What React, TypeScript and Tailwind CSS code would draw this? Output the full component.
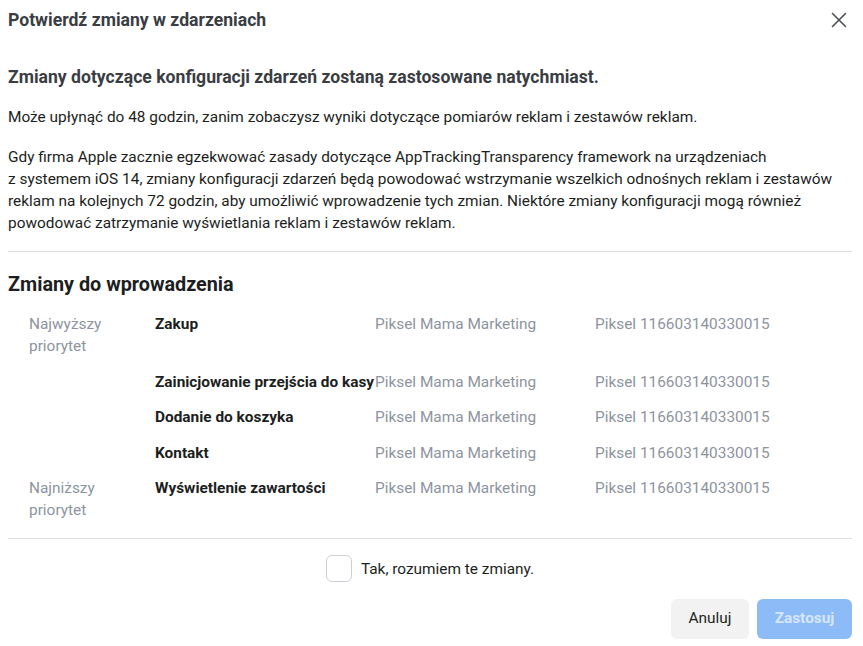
import React from 'react';

const ROWS = [
  { priority: 'Najwyższy priorytet', event: 'Zakup' },
  { priority: '', event: 'Zainicjowanie przejścia do kasy' },
  { priority: '', event: 'Dodanie do koszyka' },
  { priority: '', event: 'Kontakt' },
  { priority: 'Najniższy priorytet', event: 'Wyświetlenie zawartości' },
];

function CloseIcon() {
  return (
    <svg width="16" height="16" viewBox="0 0 16 16" fill="none">
      <path d="M1.5 1.5 L14.5 14.5 M14.5 1.5 L1.5 14.5" stroke="#4b4f56" strokeWidth="1.6" strokeLinecap="round" />
    </svg>
  );
}

export default function App() {
  return (
    <div className="w-[863px] h-[646px] bg-white font-['Roboto',sans-serif] text-[#1c1e21] overflow-hidden">
      {/* Header */}
      <div className="h-10 flex items-center justify-between pl-2 pr-4">
        <h1 className="text-[17.6px] font-bold text-[#3a3d42] leading-5">Potwierdź zmiany w zdarzeniach</h1>
        <button className="w-4 h-4 flex items-center justify-center">
          <CloseIcon />
        </button>
      </div>

      <div className="pl-2 pr-[11px]">
        <h2 className="mt-[27px] text-[17.6px] font-bold leading-5 text-[#3a3d42]">
          Zmiany dotyczące konfiguracji zdarzeń zostaną zastosowane natychmiast.
        </h2>
        <p className="mt-[19px] text-[15.4px] leading-[22px]">
          Może upłynąć do 48 godzin, zanim zobaczysz wyniki dotyczące pomiarów reklam i zestawów reklam.
        </p>
        <p className="mt-[18px] text-[15.4px] leading-[22px]">
          Gdy firma Apple zacznie egzekwować zasady dotyczące AppTrackingTransparency framework na urządzeniach
          <br />
          z systemem iOS 14, zmiany konfiguracji zdarzeń będą powodować wstrzymanie wszelkich odnośnych reklam i zestawów
          reklam na kolejnych 72 godzin, aby umożliwić wprowadzenie tych zmian. Niektóre zmiany konfiguracji mogą również
          powodować zatrzymanie wyświetlania reklam i zestawów reklam.
        </p>

        <div className="mt-[17px] border-t border-[#dadde1]" />

        <h2 className="mt-[21px] text-[19.8px] font-bold leading-6 text-[#1c1e21]">Zmiany do wprowadzenia</h2>

        {/* Table */}
        <div className="mt-4 ml-[21px] grid grid-cols-[126px_220px_220px_1fr] gap-y-[13.5px] text-[15.4px] leading-[22px]">
          {ROWS.map((row, i) => (
            <React.Fragment key={i}>
              <div className="text-[#8d949e] w-[90px]">{row.priority}</div>
              <div className="font-bold text-[#1c1e21] whitespace-nowrap">{row.event}</div>
              <div className="text-[#8d949e]">Piksel Mama Marketing</div>
              <div className="text-[#8d949e]">Piksel 116603140330015</div>
            </React.Fragment>
          ))}
        </div>

        <div className="mt-[17px] border-t border-[#dadde1]" />

        {/* Confirm */}
        <div className="mt-4 flex items-center justify-center gap-[9px]">
          <div className="w-[26px] h-[27px] rounded-md border border-[#ccd0d5] bg-white" />
          <span className="text-[15.4px] leading-[22px] text-[#1c1e21]">Tak, rozumiem te zmiany.</span>
        </div>

        {/* Footer */}
        <div className="mt-[17px] flex justify-end gap-2">
          <button className="h-10 w-[78px] rounded-md bg-[#f2f2f2] text-[15.4px] text-[#1c1e21]">Anuluj</button>
          <button className="h-10 w-[95px] rounded-md bg-[#8cbbf8] text-[15.4px] font-bold text-[#d6e6fd]">Zastosuj</button>
        </div>
      </div>
    </div>
  );
}
